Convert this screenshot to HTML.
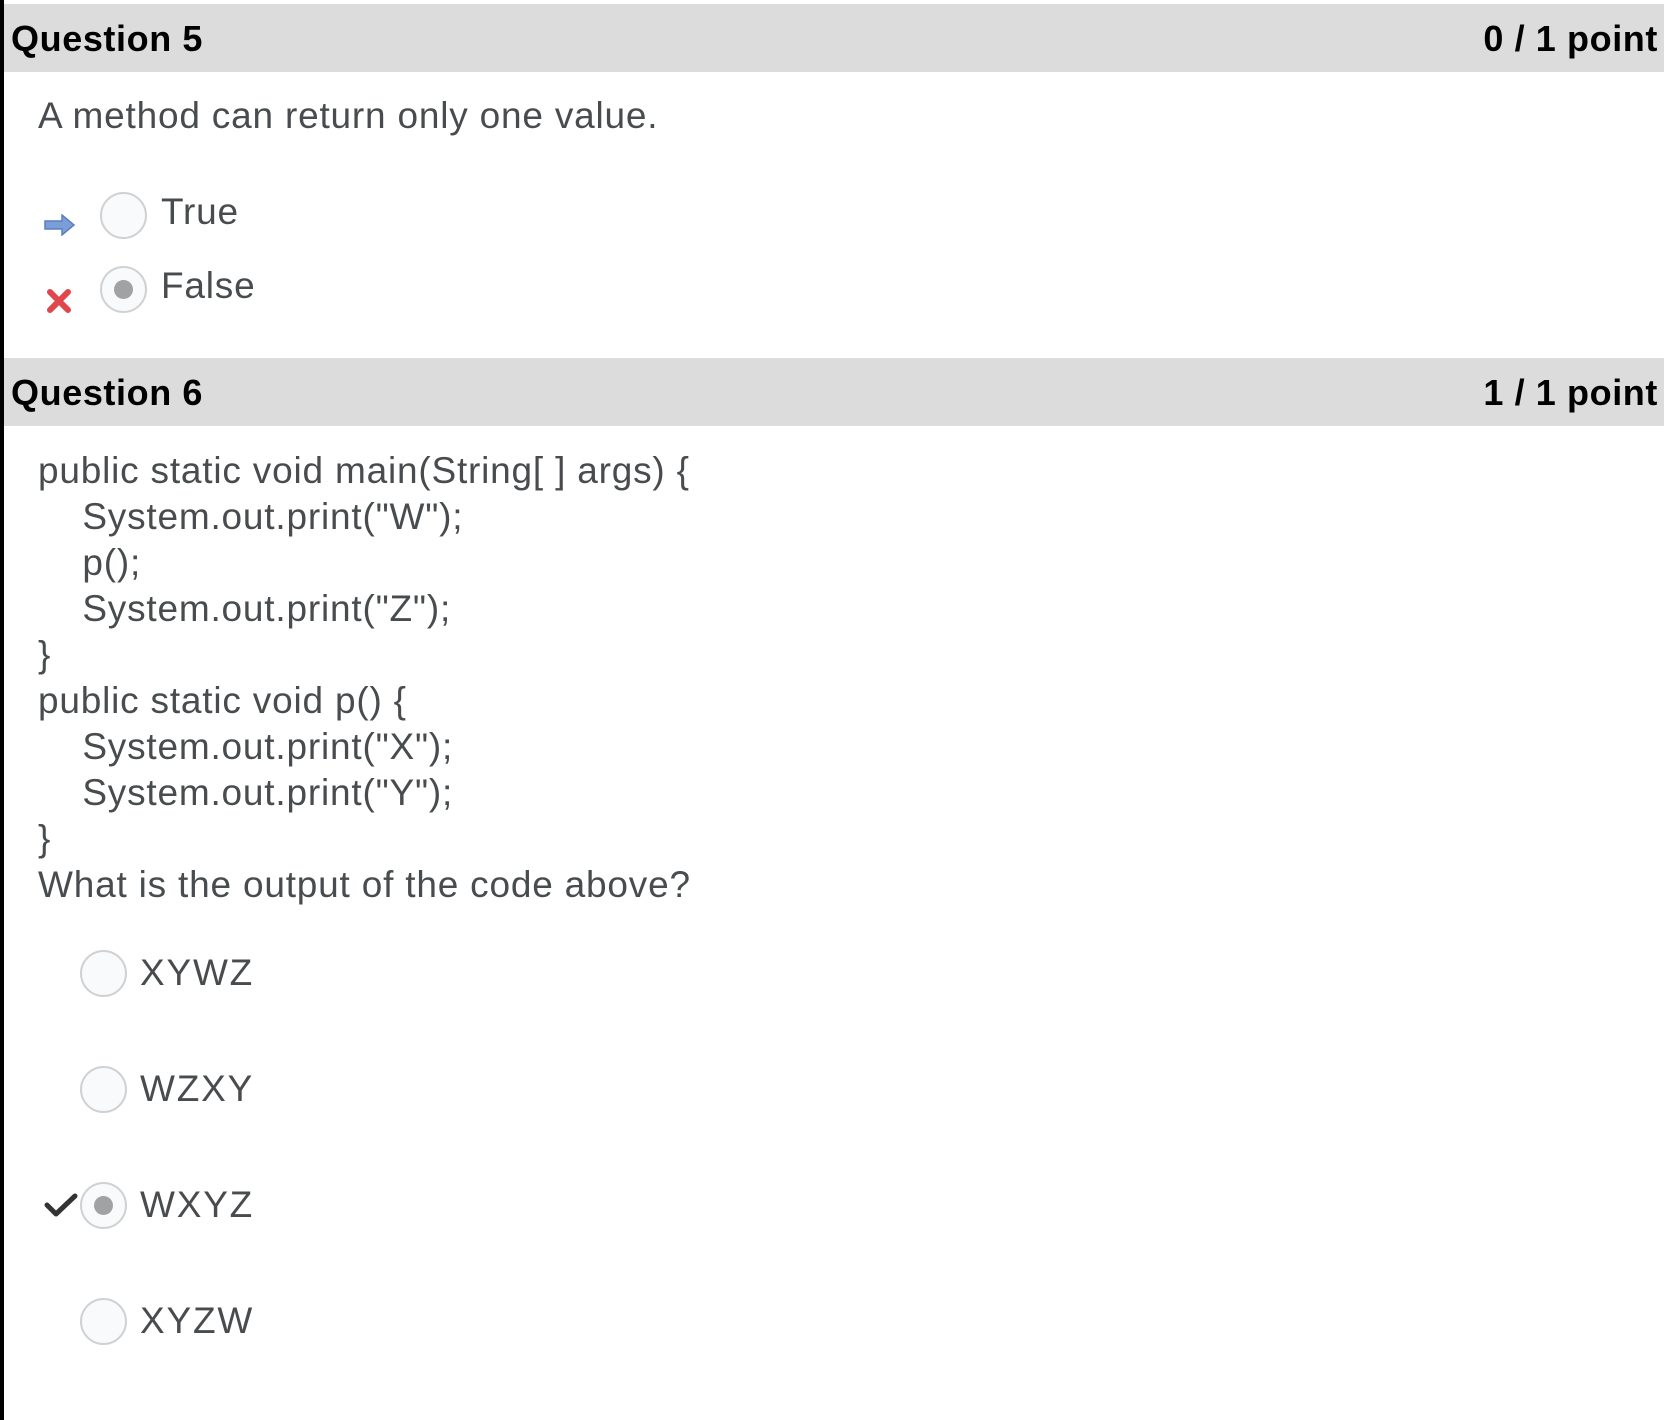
<!DOCTYPE html>
<html><head><meta charset="utf-8"><style>
body{margin:0;width:1664px;height:1420px;background:#fff;position:relative;overflow:hidden;font-family:"Liberation Sans",sans-serif;color:#494c4e}
.bar{position:absolute;left:0;top:0;width:4px;height:1420px;background:#000}
.hd{position:absolute;left:4px;right:0;height:68px;background:#dcdcdc;color:#000;font-weight:bold;font-size:36px;letter-spacing:0.6px}
.hd .l{position:absolute;left:7px;top:14px}
.hd .r{position:absolute;right:6px;top:14px}
.t{position:absolute;font-size:37px;letter-spacing:0.8px;white-space:pre;line-height:46px}
.o{letter-spacing:1.8px}
.rad{position:absolute;width:47px;height:47px;border:2px solid #cfd1d3;border-radius:50%;background:#f9fafb;box-sizing:border-box}
.rad.on::after{content:"";position:absolute;left:12px;top:12px;width:19px;height:19px;border-radius:50%;background:#a0a2a4}
</style></head><body>
<div class="bar"></div>
<div class="hd" style="top:4px"><span class="l">Question 5</span><span class="r">0 / 1 point</span></div>
<div class="t" style="left:38px;top:93px">A method can return only one value.</div>
<svg style="position:absolute;left:44px;top:214px" width="32" height="22" viewBox="0 0 32 22"><path d="M1 7h17V1l12 10-12 10v-6H1z" fill="#7b9ed8" stroke="#5b7fbf" stroke-width="1.5"/></svg>
<div class="rad" style="left:100px;top:192px"></div>
<div class="t" style="left:161px;top:189px">True</div>
<svg style="position:absolute;left:46px;top:288px" width="26" height="26" viewBox="0 0 26 26"><path d="M4 4L22 22M22 4L4 22" stroke="#e0474c" stroke-width="6" stroke-linecap="round"/></svg>
<div class="rad on" style="left:100px;top:266px"></div>
<div class="t" style="left:161px;top:263px">False</div>
<div class="hd" style="top:358px"><span class="l">Question 6</span><span class="r">1 / 1 point</span></div>
<div class="t" style="left:38px;top:448px">public static void main(String[ ] args) {
    System.out.print("W");
    p();
    System.out.print("Z");
}
public static void p() {
    System.out.print("X");
    System.out.print("Y");
}
What is the output of the code above?</div>
<div class="rad" style="left:80px;top:950px"></div>
<div class="t o" style="left:140px;top:950px">XYWZ</div>
<div class="rad" style="left:80px;top:1066px"></div>
<div class="t o" style="left:140px;top:1066px">WZXY</div>
<svg style="position:absolute;left:44px;top:1193px" width="34" height="24" viewBox="0 0 34 24"><path d="M3 12l9 9L31 3" stroke="#333" stroke-width="5" fill="none" stroke-linecap="round" stroke-linejoin="round"/></svg>
<div class="rad on" style="left:80px;top:1182px"></div>
<div class="t o" style="left:140px;top:1182px">WXYZ</div>
<div class="rad" style="left:80px;top:1298px"></div>
<div class="t o" style="left:140px;top:1298px">XYZW</div>
</body></html>
